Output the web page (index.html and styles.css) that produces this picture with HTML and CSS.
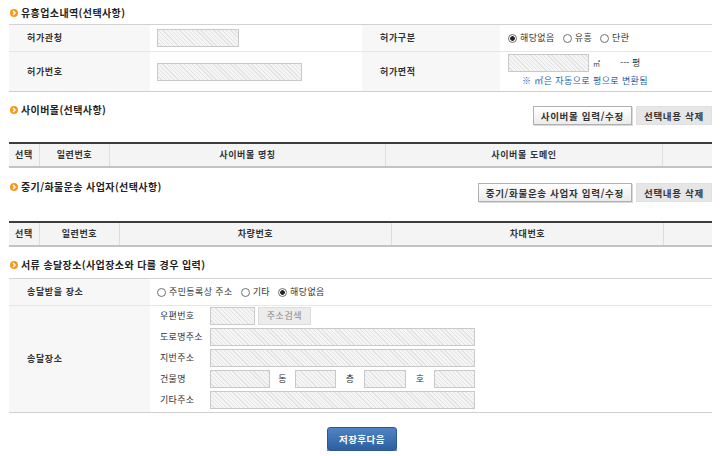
FILE: index.html
```html
<!DOCTYPE html>
<html lang="ko">
<head>
<meta charset="utf-8">
<title>유흥업소내역</title>
<link rel="stylesheet" href="styles.css">
</head>
<body>
<div class="page">

  <div class="sec-head s1">
    <h2 class="title"><svg class="bullet" width="8" height="8" viewBox="0 0 8 8"><circle cx="4" cy="4" r="4" fill="#f39a1e"/><path d="M3 2.1 L5 4 L3 5.9" stroke="#fff" stroke-width="1.4" fill="none"/></svg>유흥업소내역(선택사항)</h2>
  </div>
  <div class="form-grid g1">
    <div class="lbl">허가관청</div>
    <div class="val"><span class="field w82"></span></div>
    <div class="lbl">허가구분</div>
    <div class="val pl8">
      <span class="radio on"><i></i>해당없음</span>
      <span class="radio"><i></i>유흥</span>
      <span class="radio"><i></i>단란</span>
    </div>
    <div class="lbl last">허가번호</div>
    <div class="val last"><span class="field w145"></span></div>
    <div class="lbl last">허가면적</div>
    <div class="val last pl8 area">
      <div class="area-line"><span class="field w81"></span><span class="unit">㎡</span><span class="pyeong">--- 평</span></div>
      <div class="note">※ ㎡은 자동으로 평으로 변환됨</div>
    </div>
  </div>

  <div class="sec-head s2">
    <h2 class="title"><svg class="bullet" width="8" height="8" viewBox="0 0 8 8"><circle cx="4" cy="4" r="4" fill="#f39a1e"/><path d="M3 2.1 L5 4 L3 5.9" stroke="#fff" stroke-width="1.4" fill="none"/></svg>사이버몰(선택사항)</h2>
    <div class="btns"><span class="btn">사이버몰 입력/수정</span><span class="btn gray">선택내용 삭제</span></div>
  </div>
  <div class="list-head t2">
    <div>선택</div><div>일련번호</div><div>사이버몰 명칭</div><div>사이버몰 도메인</div><div></div>
  </div>

  <div class="sec-head s3">
    <h2 class="title"><svg class="bullet" width="8" height="8" viewBox="0 0 8 8"><circle cx="4" cy="4" r="4" fill="#f39a1e"/><path d="M3 2.1 L5 4 L3 5.9" stroke="#fff" stroke-width="1.4" fill="none"/></svg>중기/화물운송 사업자(선택사항)</h2>
    <div class="btns"><span class="btn">중기/화물운송 사업자 입력/수정</span><span class="btn gray">선택내용 삭제</span></div>
  </div>
  <div class="list-head t3">
    <div>선택</div><div>일련번호</div><div>차량번호</div><div>차대번호</div><div></div>
  </div>

  <div class="sec-head s4">
    <h2 class="title"><svg class="bullet" width="8" height="8" viewBox="0 0 8 8"><circle cx="4" cy="4" r="4" fill="#f39a1e"/><path d="M3 2.1 L5 4 L3 5.9" stroke="#fff" stroke-width="1.4" fill="none"/></svg>서류 송달장소(사업장소와 다를 경우 입력)</h2>
  </div>
  <div class="form-grid g4">
    <div class="lbl">송달받을 장소</div>
    <div class="val pl7">
      <span class="radio"><i></i>주민등록상 주소</span>
      <span class="radio"><i></i>기타</span>
      <span class="radio on"><i></i>해당없음</span>
    </div>
    <div class="lbl last">송달장소</div>
    <div class="val last addr">
      <div class="addr-line"><span class="sub">우편번호</span><span class="field w45"></span><span class="zip-btn">주소검색</span></div>
      <div class="addr-line"><span class="sub">도로명주소</span><span class="field w265"></span></div>
      <div class="addr-line"><span class="sub">지번주소</span><span class="field w265"></span></div>
      <div class="addr-line"><span class="sub">건물명</span><span class="field w60"></span><span class="unit-lbl u25">동</span><span class="field w41"></span><span class="unit-lbl u28">층</span><span class="field w42"></span><span class="unit-lbl u28">호</span><span class="field w41"></span></div>
      <div class="addr-line"><span class="sub">기타주소</span><span class="field w265"></span></div>
    </div>
  </div>

  <div class="actions"><span class="save-btn">저장후다음</span></div>
</div>
</body>
</html>
```

FILE: styles.css
```css
body {
  margin: 0;
  background: #fff;
  color: #333;
  font-family: "Noto Sans CJK KR", "Noto Sans", sans-serif;
  font-size: 9px;
  line-height: 12px;
}

.page {
  width: 703px;
  padding: 0 8px 0 9px;
}

/* section headings */
.sec-head {
  display: flex;
  justify-content: space-between;
  align-items: flex-start;
}
.title {
  margin: 0;
  padding-left: 1px;
  display: flex;
  align-items: center;
  gap: 3px;
  height: 14px;
  line-height: 14px;
  font-size: 10px;
  font-weight: bold;
  letter-spacing: 0.4px;
  color: #222;
}
.bullet { flex: none; }
.s1 { padding-top: 6px; margin-bottom: 4px; }
.s2 { margin-top: 11px; }
.s3 { margin-top: 12px; }
.s4 { margin-top: 11px; margin-bottom: 6px; }

.btns {
  display: flex;
  gap: 4px;
  margin-top: 3px;
}
.btn {
  box-sizing: border-box;
  height: 19px;
  padding: 0 7px;
  display: inline-flex;
  align-items: center;
  font-size: 9.5px;
  font-weight: bold;
  letter-spacing: 0.7px;
  color: #333;
  border: 1px solid #b0b0b0;
  background: linear-gradient(#ffffff, #ebebeb);
  box-shadow: 1px 1px 0 #d8d8d8;
}
.btn.gray {
  background: #e6e6e6;
  border-color: #e0e0e0;
  box-shadow: none;
}

/* form grids */
.form-grid {
  display: grid;
  border-top: 1px solid #d2d2d2;
  border-bottom: 1px solid #cfcfcf;
}
.g1 {
  grid-template-columns: 141px 212px 138px 212px;
  grid-template-rows: 27px 39px;
}
.g4 {
  grid-template-columns: 141px 562px;
  grid-template-rows: 27px auto;
}
.lbl, .val {
  box-sizing: border-box;
  display: flex;
  align-items: center;
  border-bottom: 1px solid #e6e6e6;
}
.lbl {
  background: #f7f7f7;
  padding-left: 18px;
  font-weight: bold;
  letter-spacing: 0.6px;
  color: #333;
}
.val { padding-left: 7px; }
.val.pl8 { padding-left: 8px; }
.val.pl7 { padding-left: 7px; }
.lbl.last, .val.last { border-bottom: 0; }

.field {
  box-sizing: border-box;
  display: inline-block;
  height: 18px;
  flex: none;
  border: 1px solid #c9c9c9;
  background: repeating-linear-gradient(45deg, #f5f5f5 0 2px, #e3e3e3 2px 3px);
}
.w41 { width: 41px; }
.w42 { width: 42px; }
.w45 { width: 45px; }
.w60 { width: 60px; }
.w81 { width: 81px; }
.w82 { width: 82px; }
.w145 { width: 145px; }
.w265 { width: 265px; }

/* radios */
.radio {
  display: inline-flex;
  align-items: center;
  margin-right: 8px;
  letter-spacing: 0.4px;
  color: #333;
}
.radio i {
  box-sizing: border-box;
  width: 9px;
  height: 9px;
  margin-right: 3px;
  border: 1px solid #707070;
  border-radius: 50%;
  background: #fff;
}
.radio.on i {
  background: radial-gradient(circle, #222 0 2px, #fff 2.6px);
}

/* area */
.area {
  flex-direction: column;
  align-items: flex-start;
  justify-content: flex-start;
  padding-top: 2px;
}
.area-line {
  display: flex;
  align-items: center;
}
.unit {
  margin-left: 4px;
  font-size: 7px;
}
.pyeong { margin-left: 20px; }
.note {
  margin-top: 3px;
  padding-left: 14px;
  letter-spacing: 0.4px;
  color: #1f62ad;
}

/* list headers */
.list-head {
  display: grid;
  height: 26px;
  box-sizing: border-box;
  border-top: 2px solid #3c3c3c;
  border-bottom: 2px solid #c3c3c3;
  background: #f4f4f4;
}
.list-head > div {
  display: flex;
  align-items: center;
  justify-content: center;
  font-weight: bold;
  letter-spacing: 0.6px;
  color: #333;
}
.list-head > div + div { border-left: 1px solid #dedede; }
.t2 { grid-template-columns: 30px 70px 276px 277px 50px; margin-top: 17px; }
.t3 { grid-template-columns: 30px 80px 272px 272px 49px; margin-top: 19px; }

/* address */
.addr {
  flex-direction: column;
  align-items: flex-start;
  gap: 3px;
  padding: 1px 0 3px 10px;
}
.addr-line {
  display: flex;
  align-items: center;
  height: 18px;
}
.sub {
  width: 50px;
  letter-spacing: 0.3px;
  color: #333;
}
.zip-btn {
  box-sizing: border-box;
  height: 18px;
  width: 53px;
  margin-left: 3px;
  display: inline-flex;
  align-items: center;
  justify-content: center;
  background: #ececec;
  border: 1px solid #dcdcdc;
  color: #888;
  letter-spacing: 0.6px;
}
.unit-lbl {
  text-align: center;
  color: #333;
}
.u25 { width: 25px; }
.u28 { width: 28px; }

/* save */
.actions {
  display: flex;
  justify-content: center;
  padding-left: 3px;
  margin-top: 14px;
}
.save-btn {
  box-sizing: border-box;
  width: 70px;
  height: 24px;
  display: inline-flex;
  align-items: center;
  justify-content: center;
  border: 1px solid #2b5793;
  border-radius: 3px;
  background: linear-gradient(#4f84c4, #2c5f9f);
  box-shadow: 0 1px 0 #1d3f70;
  color: #fff;
  font-weight: bold;
  font-size: 9.5px;
  letter-spacing: 0.5px;
}
```
